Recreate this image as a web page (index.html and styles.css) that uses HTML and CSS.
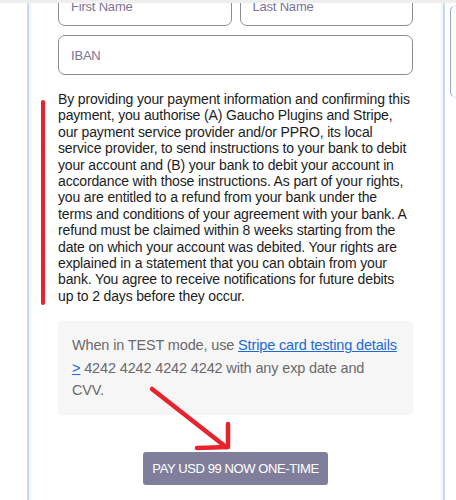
FILE: index.html
```html
<!DOCTYPE html>
<html>
<head>
    <title>Checkout - SEPA Debit</title>
    <link rel="stylesheet" href="styles.css">
</head>
<body>
<div class="topbar"></div>
<div class="page">
    <div class="card">
        <div class="form">
            <div class="row">
                <div class="field">First Name</div>
                <div class="field">Last Name</div>
            </div>
            <div class="field">IBAN</div>

            <p class="mandate">
                By providing your payment information and confirming this payment, you authorise (A) Gaucho Plugins and Stripe, our payment service provider and/or PPRO, its local service provider, to send instructions to your bank to debit your account and (B) your bank to debit your account in accordance with those instructions. As part of your rights, you are entitled to a refund from your bank under the terms and conditions of your agreement with your bank. A refund must be claimed within 8 weeks starting from the date on which your account was debited. Your rights are explained in a statement that you can obtain from your bank. You agree to receive notifications for future debits up to 2 days before they occur.
            </p>

            <div class="notice">
                When in TEST mode, use <a href="#">Stripe card testing details &gt;</a> 4242 4242 4242 4242 with any exp date and CVV.
            </div>

            <div class="actions">
                <button class="pay">PAY USD 99 NOW ONE-TIME</button>
            </div>
        </div>
    </div>
    <div class="side"></div>

    <!-- red annotations drawn over the page -->
    <div class="mark-bar"></div>
    <svg class="mark-arrow" width="84" height="66" viewBox="0 0 84 66">
        <path d="M4 4 L78 62" stroke="#e8232b" stroke-width="4.5" stroke-linecap="round" fill="none"/>
        <path d="M80 39 L80 62 L49 63" stroke="#e8232b" stroke-width="4.5" stroke-linecap="round" stroke-linejoin="round" fill="none"/>
    </svg>
</div>
</body>
</html>
```

FILE: styles.css
```css
html, body {
    margin:0;
    padding:0;
    background:#ffffff;
    overflow:hidden;
}

body {
    font-family: "Liberation Sans", Arial, sans-serif;
    color:#1f1f1f;
}

.topbar {
    position:absolute;
    top:0;
    left:0;
    right:0;
    height:3px;
    background:#eeeeee;
    z-index:3;
}

.page {
    position:relative;
    display:flex;
    align-items:flex-start;
    padding-left:27px;
    height:500px;
    overflow:hidden;
}

.card {
    width:414px;
    height:520px;
    flex:none;
    border-left:2px solid #c9daf6;
    border-right:2px solid #c9daf6;
    box-shadow: inset 3px 0 3px -2px #e3ecfb, inset -3px 0 3px -2px #e3ecfb;
    background:#ffffff;
}

.form {
    margin-top:-14px;
    padding:0 30px 0 29px;
}

.row {
    display:flex;
    gap:8px;
    margin-bottom:9px;
}

.field {
    flex:1;
    height:40px;
    box-sizing:border-box;
    border:1px solid #8d8d96;
    border-radius:7px;
    padding:0 12px;
    display:flex;
    align-items:center;
    font-size:13px;
    letter-spacing:-0.2px;
    color:#7b7398;
}

.mandate {
    margin:16px 0 0 0;
    font-size:14px;
    letter-spacing:-0.15px;
    line-height:16.4px;
    color:#1c1c1c;
}

.notice {
    margin-top:17px;
    background:#f6f6f6;
    border-radius:4px;
    padding:13px 14px 13px 14px;
    font-size:14.5px;
    letter-spacing:-0.15px;
    line-height:22.5px;
    color:#6a6a6a;
}

.notice a {
    color:#1b6ad6;
    text-decoration:underline;
}

.actions {
    display:flex;
    justify-content:center;
    margin-top:37px;
}

.pay {
    width:185px;
    height:33px;
    border:none;
    border-radius:3px;
    background:#7f7f9c;
    color:#ffffff;
    font-family: "Liberation Sans", Arial, sans-serif;
    font-size:13px;
    letter-spacing:-0.4px;
    padding:0;
}

.side {
    margin-left:5px;
    margin-top:5px;
    width:20px;
    height:91px;
    flex:none;
    border-left:1px solid #95aad6;
    border-top:1px solid #dfe6f4;
    border-bottom:1px solid #dfe6f4;
    border-radius:6px 0 0 6px;
}

.mark-bar {
    position:absolute;
    left:41px;
    top:100px;
    width:4px;
    height:205px;
    border-radius:2px;
    background:#e8232b;
}

.mark-arrow {
    position:absolute;
    left:148px;
    top:385px;
}
```
